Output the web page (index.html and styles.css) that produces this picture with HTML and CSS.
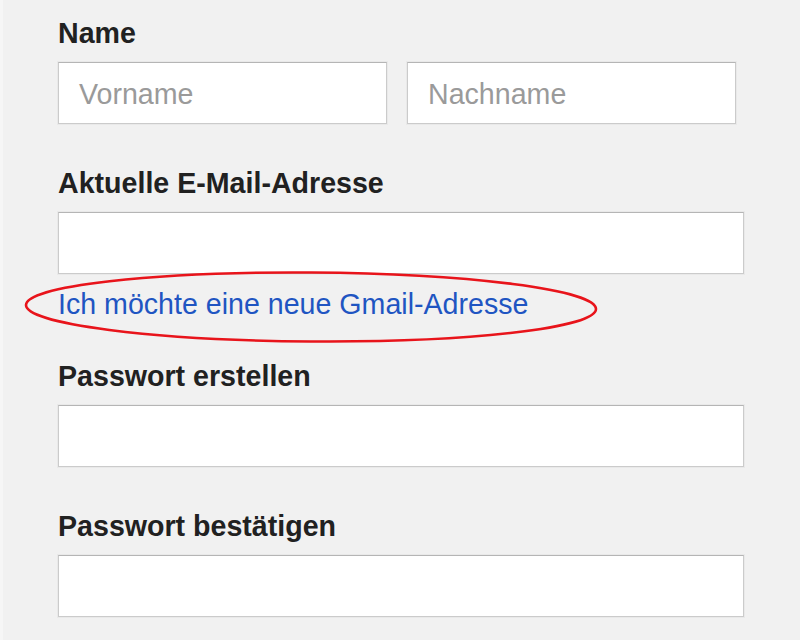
FILE: index.html
```html
<!DOCTYPE html>
<html lang="de">
<head>
<meta charset="utf-8">
<title>Konto erstellen</title>
<link rel="stylesheet" href="styles.css">
</head>
<body>
<form class="form">
  <div class="field">
    <label class="label">Name</label>
    <div class="name-row">
      <div class="input input-half"><span class="placeholder">Vorname</span></div>
      <div class="input input-half"><span class="placeholder">Nachname</span></div>
    </div>
  </div>
  <div class="field field-email">
    <label class="label">Aktuelle E-Mail-Adresse</label>
    <div class="input"></div>
  </div>
  <div class="link-row">
    <a class="link" href="#">Ich möchte eine neue Gmail-Adresse</a>
    <svg class="circle" width="600" height="80" viewBox="0 0 600 80">
      <ellipse cx="291" cy="38" rx="285" ry="34.5" fill="none" stroke="#e8141b" stroke-width="2.6" transform="rotate(0.4 291 38)"/>
    </svg>
  </div>
  <div class="field">
    <label class="label">Passwort erstellen</label>
    <div class="input"></div>
  </div>
  <div class="field">
    <label class="label">Passwort bestätigen</label>
    <div class="input"></div>
  </div>
</form>
</body>
</html>
```
FILE: styles.css
```css
html, body {
  margin: 0;
  padding: 0;
}
body {
  background: #f1f1f1;
  font-family: "Liberation Sans", Arial, sans-serif;
  width: 800px;
  height: 640px;
  overflow: hidden;
  border-left: 3px solid #f6f6f6;
  box-sizing: border-box;
}
.form {
  display: flex;
  flex-direction: column;
  padding: 17px 0 0 55px;
  width: 686px;
}
.field {
  display: flex;
  flex-direction: column;
  gap: 13px;
  margin-bottom: 43px;
}
.field-email {
  margin-bottom: 14px;
}
.label {
  font-size: 28.6px;
  line-height: 32px;
  font-weight: bold;
  color: #212121;
}
.name-row {
  display: flex;
  gap: 20px;
  width: 678px;
}
.input {
  height: 62px;
  box-sizing: border-box;
  background: #fff;
  border: 1px solid #cbcbcb;
  border-top-color: #b5b5b5;
  box-shadow: 0 0 0 1px #e9e9e9;
  display: flex;
  align-items: center;
  padding-left: 20px;
}
.input-half {
  flex: 1;
}
.placeholder {
  font-size: 28.6px;
  color: #9a9a9a;
  position: relative;
  top: 1px;
}
.link-row {
  position: relative;
  line-height: 32px;
  margin-bottom: 35px;
}
.link {
  font-size: 28.6px;
  color: #1f55c2;
  text-decoration: none;
}
.circle {
  position: absolute;
  left: -38px;
  top: -19px;
  pointer-events: none;
}
```
